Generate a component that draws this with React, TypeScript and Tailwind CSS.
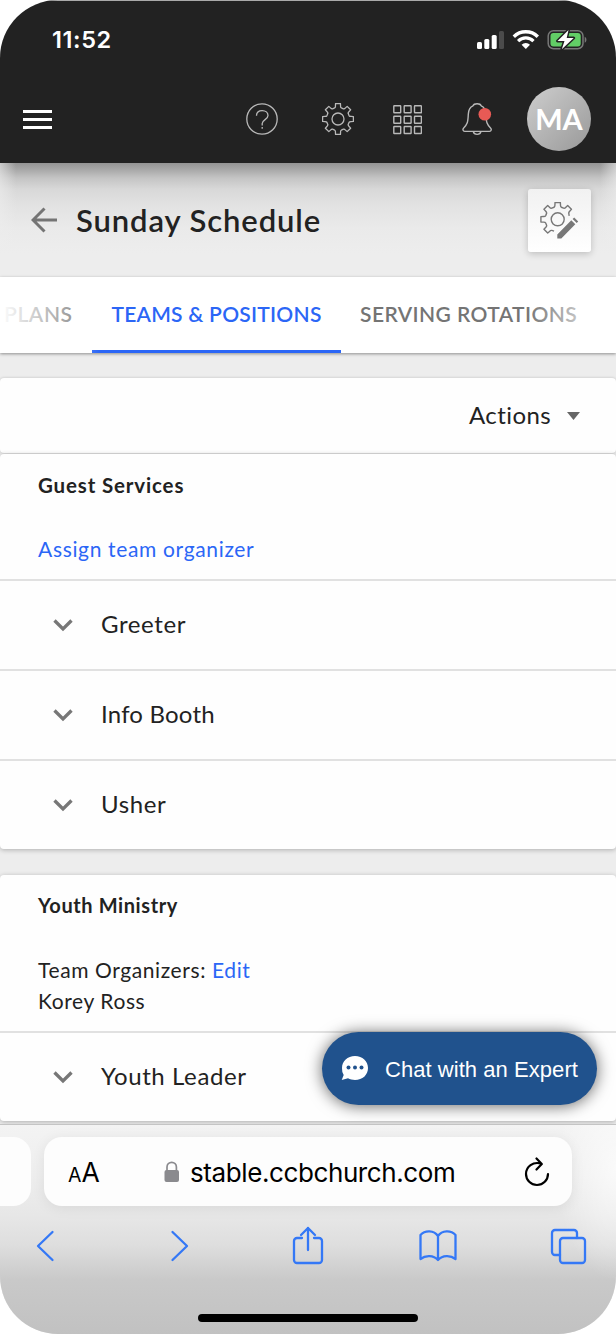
import type { ReactNode } from "react";

function polar(cx: number, cy: number, radius: number, degrees: number) {
  const a = (degrees * Math.PI) / 180;
  return (cx + radius * Math.cos(a)).toFixed(2) + " " + (cy + radius * Math.sin(a)).toFixed(2);
}

// Outline of gear teeth centred on the given angles, in clockwise order.
function teeth(cx: number, cy: number, outer: number, angles: number[]) {
  const body = outer * 0.74;
  const points = angles.map((a) =>
    [
      polar(cx, cy, body, a - 17),
      "Q" + polar(cx, cy, body * 1.02, a - 12) + " " + polar(cx, cy, outer * 0.86, a - 11),
      "L" + polar(cx, cy, outer, a - 9),
      "L" + polar(cx, cy, outer, a + 9),
      "L" + polar(cx, cy, outer * 0.86, a + 11),
      "Q" + polar(cx, cy, body * 1.02, a + 12) + " " + polar(cx, cy, body, a + 17),
    ].join(""),
  );
  return points.join("L");
}

const fullGear = "M" + teeth(16, 16, 15.6, [0, 45, 90, 135, 180, 225, 270, 315]) + "Z";
const openGear =
  "M" + polar(17.7, 17.3, 12.4, 107) + "L" + teeth(17.7, 17.3, 17, [135, 180, 225, 270, 315]) + "L" + polar(17.7, 17.3, 12, -17);

function StatusBar() {
  return (
    <div className="flex h-[75px] items-start justify-between pr-[29px] pl-[52px] text-white">
      <span className="mt-[23px] text-[23.5px] leading-[32px] font-semibold tracking-[0.6px]">11:52</span>
      <svg className="mt-[27px]" width="110" height="24" viewBox="0 0 110 24" fill="none">
        <g fill="#fff">
          <rect x="0" y="14" width="5" height="7" rx="1.5" />
          <rect x="7.3" y="11" width="5" height="10" rx="1.5" />
          <rect x="14.7" y="7" width="5" height="14" rx="1.5" />
        </g>
        <rect x="22" y="3" width="5" height="18" rx="1.5" fill="#4b4b4b" />
        <path d="M36.8 8.7a17 17 0 0 1 24 0" stroke="#fff" strokeWidth="3.4" />
        <path d="M41.1 13.1a11 11 0 0 1 15.4 0" stroke="#fff" strokeWidth="3.2" />
        <path d="M44.6 16.7a6 6 0 0 1 8.4 0l-4.2 4.2z" fill="#fff" />
        <rect x="71.2" y="2.7" width="34.8" height="18" rx="5.3" stroke="#777" strokeWidth="1.5" />
        <rect x="73.5" y="5" width="30.2" height="13.4" rx="3" fill="#62ce66" />
        <path d="M107.7 8.7c2.3 1 2.3 5 0 6z" fill="#777" />
        <path d="M91.5 2 80.5 13h7l-2.7 8.2L96.7 10h-7z" fill="#fff" stroke="#222" strokeWidth="3" paintOrder="stroke" strokeLinejoin="round" />
      </svg>
    </div>
  );
}

function Toolbar() {
  return (
    <div className="flex h-[87px] items-start pr-[25px] pl-[23px]">
      <button className="mt-[33.5px] flex w-[29px] flex-col gap-[5px]" aria-label="Menu">
        <span className="h-[3px] bg-white" />
        <span className="h-[3px] bg-white" />
        <span className="h-[3px] bg-white" />
      </button>
      <svg className="mt-[27px] ml-[194px]" width="32" height="32" viewBox="0 0 32 32" fill="none" stroke="#b9b9b9" strokeWidth="1.3">
        <circle cx="16" cy="16" r="15.2" />
        <path d="M10.5 12.8c0-3.2 2.2-5.2 5.7-5.2 3.4 0 5.8 2 5.8 4.9 0 4-5.8 4.2-5.8 8.1v1.8M16.2 24v1.8" />
      </svg>
      <svg className="mt-[27px] ml-[44px]" width="32" height="32" viewBox="0 0 32 32" fill="none" stroke="#b9b9b9" strokeWidth="1.3" strokeLinejoin="round">
        <path d={fullGear} />
        <circle cx="16" cy="16" r="6" />
      </svg>
      <svg className="mt-[29px] ml-[39px]" width="29" height="30" viewBox="0 0 29 30" fill="none" stroke="#b9b9b9" strokeWidth="1.4">
        {[0.8, 11.2, 21.5].flatMap((y) => [0.8, 11.2, 21.5].map((x) => <rect key={x + "-" + y} x={x} y={y} width="6.9" height="7" rx=".5" />))}
      </svg>
      <svg className="mt-[27px] ml-[40px]" width="32" height="33" viewBox="0 0 32 33" fill="none" stroke="#b9b9b9" strokeWidth="1.4" strokeLinejoin="round">
        <path d="M11 2.8C12 .1 18.2.1 19.2 2.8c3.3 1.3 4.5 4.2 4.7 8.4.3 8.500 1.300 10.600 4.600 13.700 1.300 1.200.8 3.500-1 3.500H2.700c-1.800 0-2.300-2.300-1-3.500 3.300-3.100 4.300-5.200 4.600-13.700.2-4.200 1.400-7.100 4.700-8.400zM11.300 28.700c.7 3.500 6.900 3.500 7.600 0" />
        <circle cx="22.8" cy="11.3" r="6.3" fill="#e75a55" stroke="none" />
      </svg>
      <div className="mt-[11px] ml-[33px] flex size-[64px] items-center justify-center rounded-full bg-linear-to-br from-[#cecece] to-[#999] font-['Lato'] text-[29px] font-bold text-white">MA</div>
    </div>
  );
}

function Heading() {
  return (
    <div className="flex h-[114px] items-start bg-[linear-gradient(90deg,#ededed99_0px,#ededed00_16px,#ededed00_600px,#ededed99_616px),linear-gradient(180deg,#949494_0px,#a6a6a6_6px,#c4c4c4_15px,#d8d8d8_26px,#e2e2e2_42px,#eaeaea_65px,#ededed_90px)] pr-[25px] pl-[31px]">
      <svg className="mt-[44px]" width="26" height="26" viewBox="0 0 26 26" fill="none" stroke="#747474" strokeWidth="3">
        <path d="M26 13H2.5M13.5 1.500 2 13l11.500 11.500" />
      </svg>
      <h1 className="mt-[38px] ml-[19px] font-['Lato'] text-[31px] leading-[38px] font-semibold tracking-[0.900px] text-[#222]">Sunday Schedule</h1>
      <button className="mt-[26px] ml-auto flex size-[63px] items-start justify-start rounded-[3px] bg-linear-to-b from-[#f1f1f1] to-white pt-[13px] pl-[12px] shadow-[0_2px_7px_#0003]" aria-label="Edit settings">
        <svg width="40" height="38" viewBox="0 0 40 38" fill="none" stroke="#777" strokeWidth="1.400" strokeLinejoin="round">
          <path d={openGear} />
          <circle cx="17.7" cy="17.3" r="6.5" />
          <path d="M17.3 32.5v3.900h4L35.300 22.300l-4-4zM32.600 17l1.600-1.500 4 4-1.500 1.500z" fill="#777" stroke="none" />
        </svg>
      </button>
    </div>
  );
}

function Tabs() {
  return (
    <nav className="relative flex h-[76px] bg-white font-['Lato'] text-[21px] leading-[74px] font-semibold whitespace-nowrap text-[#747474] shadow-[0_1px_3px_#0006]">
      <span className="ml-[4px] w-[88px] tracking-[0.6px]">PLANS</span>
      <span className="w-[249px] border-b-[3px] border-[#2b66f6] text-center tracking-[0.25px] text-[#2b66f6]">TEAMS &amp; POSITIONS</span>
      <span className="ml-[19px] tracking-[0.42px]">SERVING ROTATIONS</span>
      <div className="pointer-events-none absolute inset-y-0 left-0 w-[100px] bg-linear-to-r from-white to-transparent" />
      <div className="pointer-events-none absolute inset-y-0 right-0 w-[90px] bg-linear-to-l from-white to-transparent" />
    </nav>
  );
}

function Position({ name }: { name: string }) {
  return (
    <div className="flex h-[90px] items-center border-t-2 border-[#e1e1e1] pl-[53px]">
      <svg width="20" height="13" viewBox="0 0 20 13" fill="none" stroke="#777" strokeWidth="3.3"><path d="m1.500 1.500 8.500 8.500 8.500-8.500" /></svg>
      <span className={"ml-[28px] pb-[2px] font-['Lato'] text-[24px] " + (name === "Info Booth" ? "tracking-[0.2px]" : "tracking-[0.6px]")}>{name}</span>
    </div>
  );
}

function Card({ children, className }: { children: ReactNode; className: string }) {
  return <section className={"rounded-[4px] bg-[#fefefe] " + className}>{children}</section>;
}

function Browser() {
  return (
    <footer className="relative h-[211px] border-t border-[#c4c4c4] bg-[radial-gradient(60px_110px_at_616px_45px,#ffffffb0,#ffffff00),linear-gradient(180deg,#f3f3f3_0px,#eee_50px,#e7e7e7_90px,#dedede_120px,#c9c9c9_155px,#c1c1c1_211px)]">
      <div className="flex pt-[12px]">
        <div className="h-[69px] w-[31px] rounded-r-[18px] bg-[#fdfdfd]" />
        <div className="ml-[13px] flex h-[69px] w-[528px] items-center rounded-[18px] bg-[#fdfdfd] pl-[24px] text-black shadow-[0_2px_14px_#00000012]">
          <span className="w-[96px] pt-[2px] text-[26.5px]"><span className="text-[19.5px]">A</span>A</span>
          <svg width="16" height="22" viewBox="0 0 16 22" fill="none"><rect x=".5" y="9" width="14.5" height="12" rx="2" fill="#8a8a8e" /><path d="M3 10V6a4.700 4.700 0 0 1 9.400 0v4" stroke="#8a8a8e" strokeWidth="1.7" /></svg>
          <span className="ml-[10px] pt-[2px] text-[26px] tracking-[-0.4px]">stable.ccbchurch.com</span>
          <svg className="mr-[22px] ml-auto" width="26" height="30" viewBox="0 0 26 30" fill="none" stroke="#000" strokeWidth="2.2"><path d="M17.500 6.800C9 3.900 2 10 2 17a11 11 0 0 0 22 0M12.500 1.500l5.300 5.500-5.300 5.500" strokeLinecap="round" strokeLinejoin="round" /></svg>
        </div>
      </div>
      <svg className="mt-[19px]" width="616" height="44" viewBox="0 0 616 44" fill="none" stroke="#3478f6" strokeWidth="2.3" strokeLinecap="round" strokeLinejoin="round">
        <path d="M52.500 7 38 21l14.500 14M172.500 7 187 21l-14.500 14" />
        <path d="M302 13h-5a3 3 0 0 0-3 3v19a3 3 0 0 0 3 3h22a3 3 0 0 0 3-3V16a3 3 0 0 0-3-3h-5M308 25V3m-7 7 7-7 7 7" />
        <path d="M438 11c-4-6-13-6-17.500-1v24c5-4 13-4 17.500 1 4.500-5 12.500-5 17.500-1V10c-4.500-5-13.500-5-17.500 1zm0 0v24" />
        <rect x="560" y="13" width="25" height="25" rx="3" /><path d="M560 30h-5a3 3 0 0 1-3-3V8a3 3 0 0 1 3-3h19a3 3 0 0 1 3 3v5" />
      </svg>
      <div className="mx-auto mt-[45px] h-[8px] w-[220px] rounded-full bg-black" />
    </footer>
  );
}

export default function App() {
  return (
    <div className="h-[1335px] w-[616px] overflow-hidden bg-white font-['Inter',sans-serif] text-[#222] [font-variant-ligatures:none]">
      <main className="relative h-[1334px] overflow-hidden rounded-[58px] bg-[#ededed]">
        <header className="border-t border-[#aaa] bg-[#222]"><StatusBar /><Toolbar /></header>
        <Heading />
        <Tabs />
        <Card className="mt-[25px] flex h-[75px] items-center justify-end pr-[36px] shadow-[0_0_3px_#0003]">
          <span className="pb-[2px] font-['Lato'] text-[24px] tracking-[0.4px]">Actions</span>
          <svg className="ml-[16px]" width="13" height="8" viewBox="0 0 13 8"><path d="M0 0h13L6.500 8z" fill="#666" /></svg>
        </Card>
        <Card className="mt-px h-[395px] shadow-[0_1px_5px_#0004]">
          <div className="h-[125px] px-[38px] pt-[16px] font-['Lato'] leading-[30px]">
            <h2 className="text-[20.5px] font-bold tracking-[0.85px]">Guest Services</h2>
            <a className="mt-[34px] block text-[21px] tracking-[0.66px] text-[#2b66f6]">Assign team organizer</a>
          </div>
          <Position name="Greeter" /><Position name="Info Booth" /><Position name="Usher" />
        </Card>
        <Card className="mt-[26px] h-[246px] shadow-[0_1px_5px_#0004]">
          <div className="h-[156px] px-[38px] pt-[15px] font-['Lato'] text-[21px] leading-[31px] tracking-[0.6px]">
            <h2 className="text-[20px] font-bold">Youth Ministry</h2>
            <p className="mt-[33px]">Team Organizers: <a className="text-[#2b66f6]">Edit</a></p>
            <p>Korey Ross</p>
          </div>
          <Position name="Youth Leader" />
        </Card>
        <div className="h-[3px]" />
        <Browser />
        <button className="absolute top-[1032px] left-[322px] flex h-[73px] w-[275px] items-center rounded-full bg-[#20528d] pl-[19px] font-['Liberation_Sans'] text-[22px] tracking-[0.05px] text-white shadow-[0_1px_16px_#0009]">
          <svg className="-mt-[2px]" width="28" height="26" viewBox="0 0 28 26" fill="#fff"><path d="M14 1c7.500 0 13 5 13 12s-5.500 12-13 12c-2.500 0-5-.6-7-1.700L.7 25l2-5A12 12 0 0 1 1 13C1 6 6.500 1 14 1" /><g fill="#20528d"><circle cx="7.500" cy="12.500" r="2" /><circle cx="14" cy="12.500" r="2" /><circle cx="20.500" cy="12.500" r="2" /></g></svg>
          <span className="ml-[16px] pt-[2px] whitespace-nowrap">Chat with an Expert</span>
        </button>
      </main>
    </div>
  );
}
